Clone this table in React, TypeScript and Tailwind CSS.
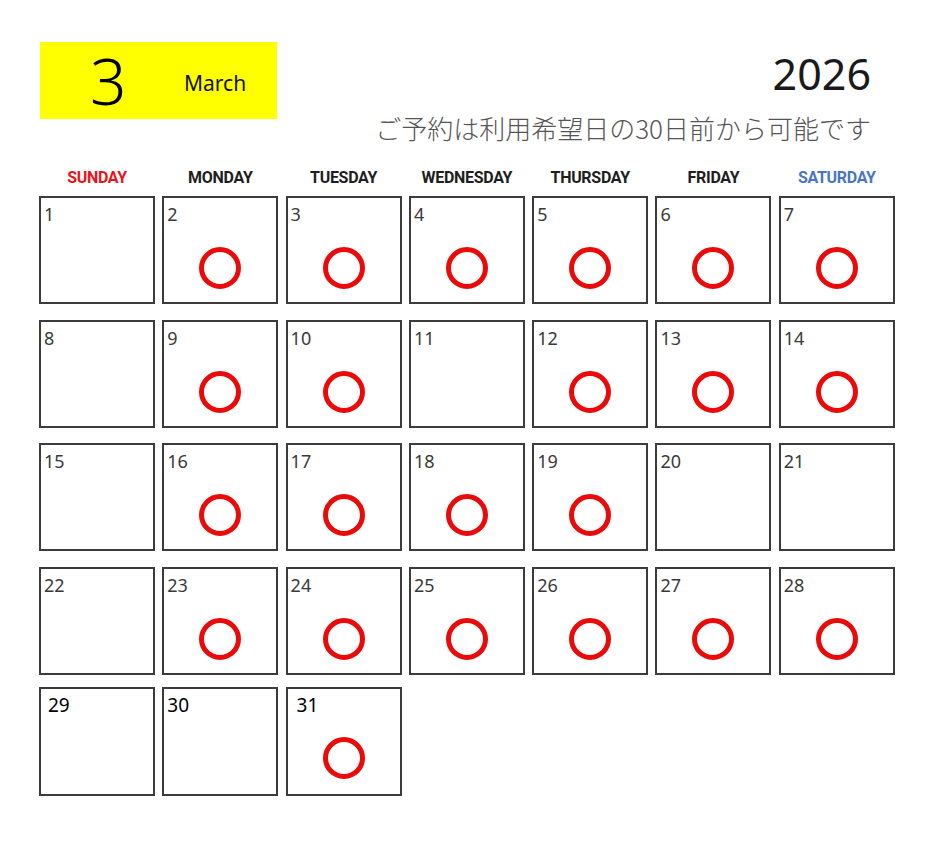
import React from "react";

type Cell = { d: number; o: boolean };

const rows: Cell[][] = [
  [1, 2, 3, 4, 5, 6, 7].map((d) => ({ d, o: d !== 1 })),
  [8, 9, 10, 11, 12, 13, 14].map((d) => ({ d, o: ![8, 11].includes(d) })),
  [15, 16, 17, 18, 19, 20, 21].map((d) => ({ d, o: ![15, 20, 21].includes(d) })),
  [22, 23, 24, 25, 26, 27, 28].map((d) => ({ d, o: d !== 22 })),
];

const days = [
  { t: "SUNDAY", c: "text-[#e8141c]" },
  { t: "MONDAY", c: "text-[#1e1e1e]" },
  { t: "TUESDAY", c: "text-[#1e1e1e]" },
  { t: "WEDNESDAY", c: "text-[#1e1e1e]" },
  { t: "THURSDAY", c: "text-[#1e1e1e]" },
  { t: "FRIDAY", c: "text-[#1e1e1e]" },
  { t: "SATURDAY", c: "text-[#4a74c8]" },
];

const rowMargins = ["mt-0", "mt-[16px]", "mt-[15px]", "mt-[16px]"];

function Ring() {
  return (
    <div className="w-[42px] h-[42px] rounded-full border-[5px] border-[#ea0a0a] self-center mt-auto mb-[13px]" />
  );
}

export default function App() {
  return (
    <div className="w-[936px] h-[842px] bg-white relative pl-[39px] pt-[42px] font-['Noto_Sans',sans-serif]">
      {/* header */}
      <div className="flex items-start h-[126px] w-[832px]">
        <div className="ml-[1px] w-[237px] h-[77px] bg-[#ffff00] flex items-center">
          <span className="ml-[50px] w-[36px] text-[64px] leading-none font-light text-black text-center">3</span>
          <span className="ml-[58px] pt-[5px] text-[21px] leading-none text-[#111]">March</span>
        </div>
        <div className="ml-auto flex flex-col items-end">
          <span className="mt-[10px] text-[43px] leading-none text-[#1a1a1a]">2026</span>
          <span className="mt-[20px] text-[26px] leading-none text-[#555] font-['Noto_Sans_CJK_JP',sans-serif] font-light">
            ご予約は利用希望日の30日前から可能です
          </span>
        </div>
      </div>

      {/* day labels */}
      <div className="grid grid-cols-[repeat(7,116px)] gap-x-[7.3px] h-[28px]">
        {days.map((d) => (
          <div
            key={d.t}
            className={`text-center text-[16px] leading-[20px] font-bold tracking-[-0.3px] font-['Liberation_Sans_Narrow','Roboto',sans-serif] ${d.c}`}
          >
            {d.t}
          </div>
        ))}
      </div>

      {/* weeks */}
      {rows.map((r, i) => (
        <div key={i} className={`grid grid-cols-[repeat(7,116px)] gap-x-[7.3px] ${rowMargins[i]}`}>
          {r.map((c) => (
            <div key={c.d} className="h-[108px] border-2 border-[#3c3c3c] flex flex-col">
              <span className="pl-[3px] pt-[7px] text-[18px] leading-none text-[#3a3a3a]">{c.d}</span>
              {c.o && <Ring />}
            </div>
          ))}
        </div>
      ))}

      {/* last week */}
      <div className="grid grid-cols-[repeat(7,116px)] gap-x-[7.3px] mt-[12px]">
        <div className="h-[109px] border-2 border-[#3c3c3c] flex flex-col">
          <span className="pl-[7px] pt-[7px] text-[19px] leading-none text-black">29</span>
        </div>
        <div className="h-[109px] border-2 border-[#3c3c3c] flex flex-col">
          <span className="pl-[3px] pt-[7px] text-[19px] leading-none text-black">30</span>
        </div>
        <div className="h-[109px] border-2 border-[#3c3c3c] flex flex-col">
          <span className="pl-[9px] pt-[7px] text-[19px] leading-none text-black">31</span>
          <div className="w-[42px] h-[42px] rounded-full border-[5px] border-[#ea0a0a] self-center mt-auto mb-[15px]" />
        </div>
      </div>
    </div>
  );
}
